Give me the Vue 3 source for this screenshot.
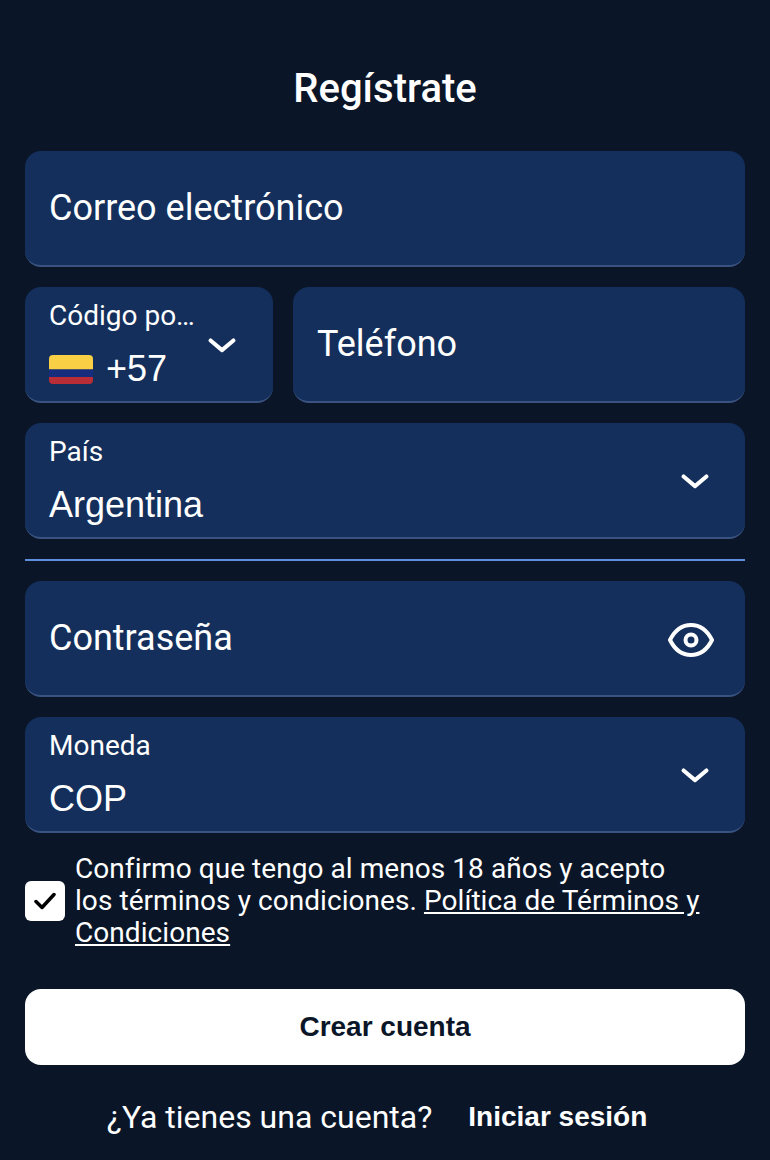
<script setup>
const chevron = 'M2 3l10 8.5L22 3'
</script>

<template>
  <div class="page">
    <h1 class="title">Regístrate</h1>

    <div class="field">
      <span class="placeholder">Correo electrónico</span>
    </div>

    <div class="phone-row">
      <div class="field code">
        <div class="stack">
          <span class="label">Código po…</span>
          <span class="value code-value">
            <svg class="flag" viewBox="0 0 44 29">
              <defs>
                <clipPath id="flag-clip"><rect width="44" height="29" rx="4" /></clipPath>
              </defs>
              <g clip-path="url(#flag-clip)">
                <rect width="44" height="14.5" fill="#f8cf45" />
                <rect y="14.5" width="44" height="7.5" fill="#162d7e" />
                <rect y="22" width="44" height="7" fill="#b92d36" />
              </g>
            </svg>
            +57
          </span>
        </div>
        <svg class="chevron" viewBox="0 0 24 14"><path :d="chevron" /></svg>
      </div>
      <div class="field phone">
        <span class="placeholder">Teléfono</span>
      </div>
    </div>

    <div class="field">
      <div class="stack">
        <span class="label">País</span>
        <span class="value">Argentina</span>
      </div>
      <svg class="chevron" viewBox="0 0 24 14"><path :d="chevron" /></svg>
    </div>

    <div class="divider"></div>

    <div class="field">
      <span class="placeholder">Contraseña</span>
      <svg class="eye" viewBox="0 0 46 34">
        <path d="M2 17C7 7 14 2 23 2s16 5 21 15c-5 10-12 15-21 15S7 27 2 17z" />
        <circle cx="23" cy="17" r="5.5" />
      </svg>
    </div>

    <div class="field">
      <div class="stack">
        <span class="label">Moneda</span>
        <span class="value">COP</span>
      </div>
      <svg class="chevron" viewBox="0 0 24 14"><path :d="chevron" /></svg>
    </div>

    <div class="terms">
      <div class="checkbox">
        <svg viewBox="0 0 22 18"><path d="M2 9.5l6 6L20 2.5" /></svg>
      </div>
      <p class="terms-text">
        Confirmo que tengo al menos 18 años y acepto los términos y condiciones.
        <a class="link">Política de Términos y Condiciones</a>
      </p>
    </div>

    <button class="submit">Crear cuenta</button>

    <div class="footer">
      <span>¿Ya tienes una cuenta?</span>
      <a class="login">Iniciar sesión</a>
    </div>
  </div>
</template>

<style scoped>
.page {
  box-sizing: border-box;
  height: 1160px;
  padding: 65px 25px 0;
  display: flex;
  flex-direction: column;
  gap: 20px;
  background: #0a1628;
  color: #fff;
  font-family: Roboto, "Liberation Sans", sans-serif;
  overflow: hidden;
}

.title {
  margin: 0 0 18px;
  font-size: 40px;
  line-height: 48px;
  font-weight: 500;
  text-align: center;
}

.field {
  box-sizing: border-box;
  height: 116px;
  flex-shrink: 0;
  display: flex;
  align-items: center;
  justify-content: space-between;
  padding: 2px 24px 2px;
  border-radius: 16px;
  border-bottom: 2px solid #3a5380;
  background: #142f5b;
}

.placeholder {
  font-size: 36px;
}

.stack {
  display: flex;
  flex-direction: column;
  gap: 18px;
  padding: 3px 0 1px;
}

.label {
  font-size: 28px;
  line-height: 30px;
}

.value {
  font-family: "Liberation Sans", Arial, sans-serif;
  font-size: 36px;
  line-height: 40px;
}

.phone-row {
  display: flex;
  gap: 20px;
}

.code {
  width: 248px;
  flex-shrink: 0;
}

.code .chevron {
  margin-right: 13px;
}

.phone {
  flex: 1;
}

.code-value {
  display: flex;
  align-items: center;
  gap: 13px;
}

.flag {
  width: 44px;
  height: 29px;
}

.chevron {
  width: 28px;
  height: 16px;
  flex-shrink: 0;
  margin-top: 2px;
  margin-right: 12px;
  fill: none;
  stroke: #fff;
  stroke-width: 3.5;
  stroke-linecap: round;
  stroke-linejoin: round;
}

.eye {
  width: 46px;
  height: 34px;
  margin-top: 4px;
  margin-right: 7px;
  fill: none;
  stroke: #fff;
  stroke-width: 4;
  stroke-linejoin: round;
}

.divider {
  height: 2px;
  flex-shrink: 0;
  background: #5f8ede;
}

.terms {
  display: flex;
  align-items: center;
  gap: 10px;
}

.checkbox {
  box-sizing: border-box;
  width: 40px;
  height: 40px;
  flex-shrink: 0;
  display: flex;
  align-items: center;
  justify-content: center;
  border-radius: 6px;
  background: #fff;
}

.checkbox svg {
  width: 22px;
  height: 18px;
  fill: none;
  stroke: #000;
  stroke-width: 3.5;
  stroke-linecap: round;
  stroke-linejoin: round;
}

.terms-text {
  width: 632px;
  margin: 0;
  font-size: 28px;
  line-height: 32px;
  letter-spacing: 0.06px;
}

.link {
  text-decoration: underline;
}

.submit {
  height: 76px;
  flex-shrink: 0;
  margin-top: 20px;
  border: none;
  border-radius: 16px;
  background: #fff;
  color: #0a1628;
  font-family: "Liberation Sans", Arial, sans-serif;
  font-size: 28px;
  font-weight: 700;
}

.footer {
  display: flex;
  justify-content: center;
  align-items: center;
  gap: 36px;
  margin-top: 12px;
  padding-right: 16px;
  font-size: 32px;
  line-height: 40px;
}

.login {
  font-family: "Liberation Sans", Arial, sans-serif;
  font-size: 28px;
  font-weight: 700;
}
</style>
